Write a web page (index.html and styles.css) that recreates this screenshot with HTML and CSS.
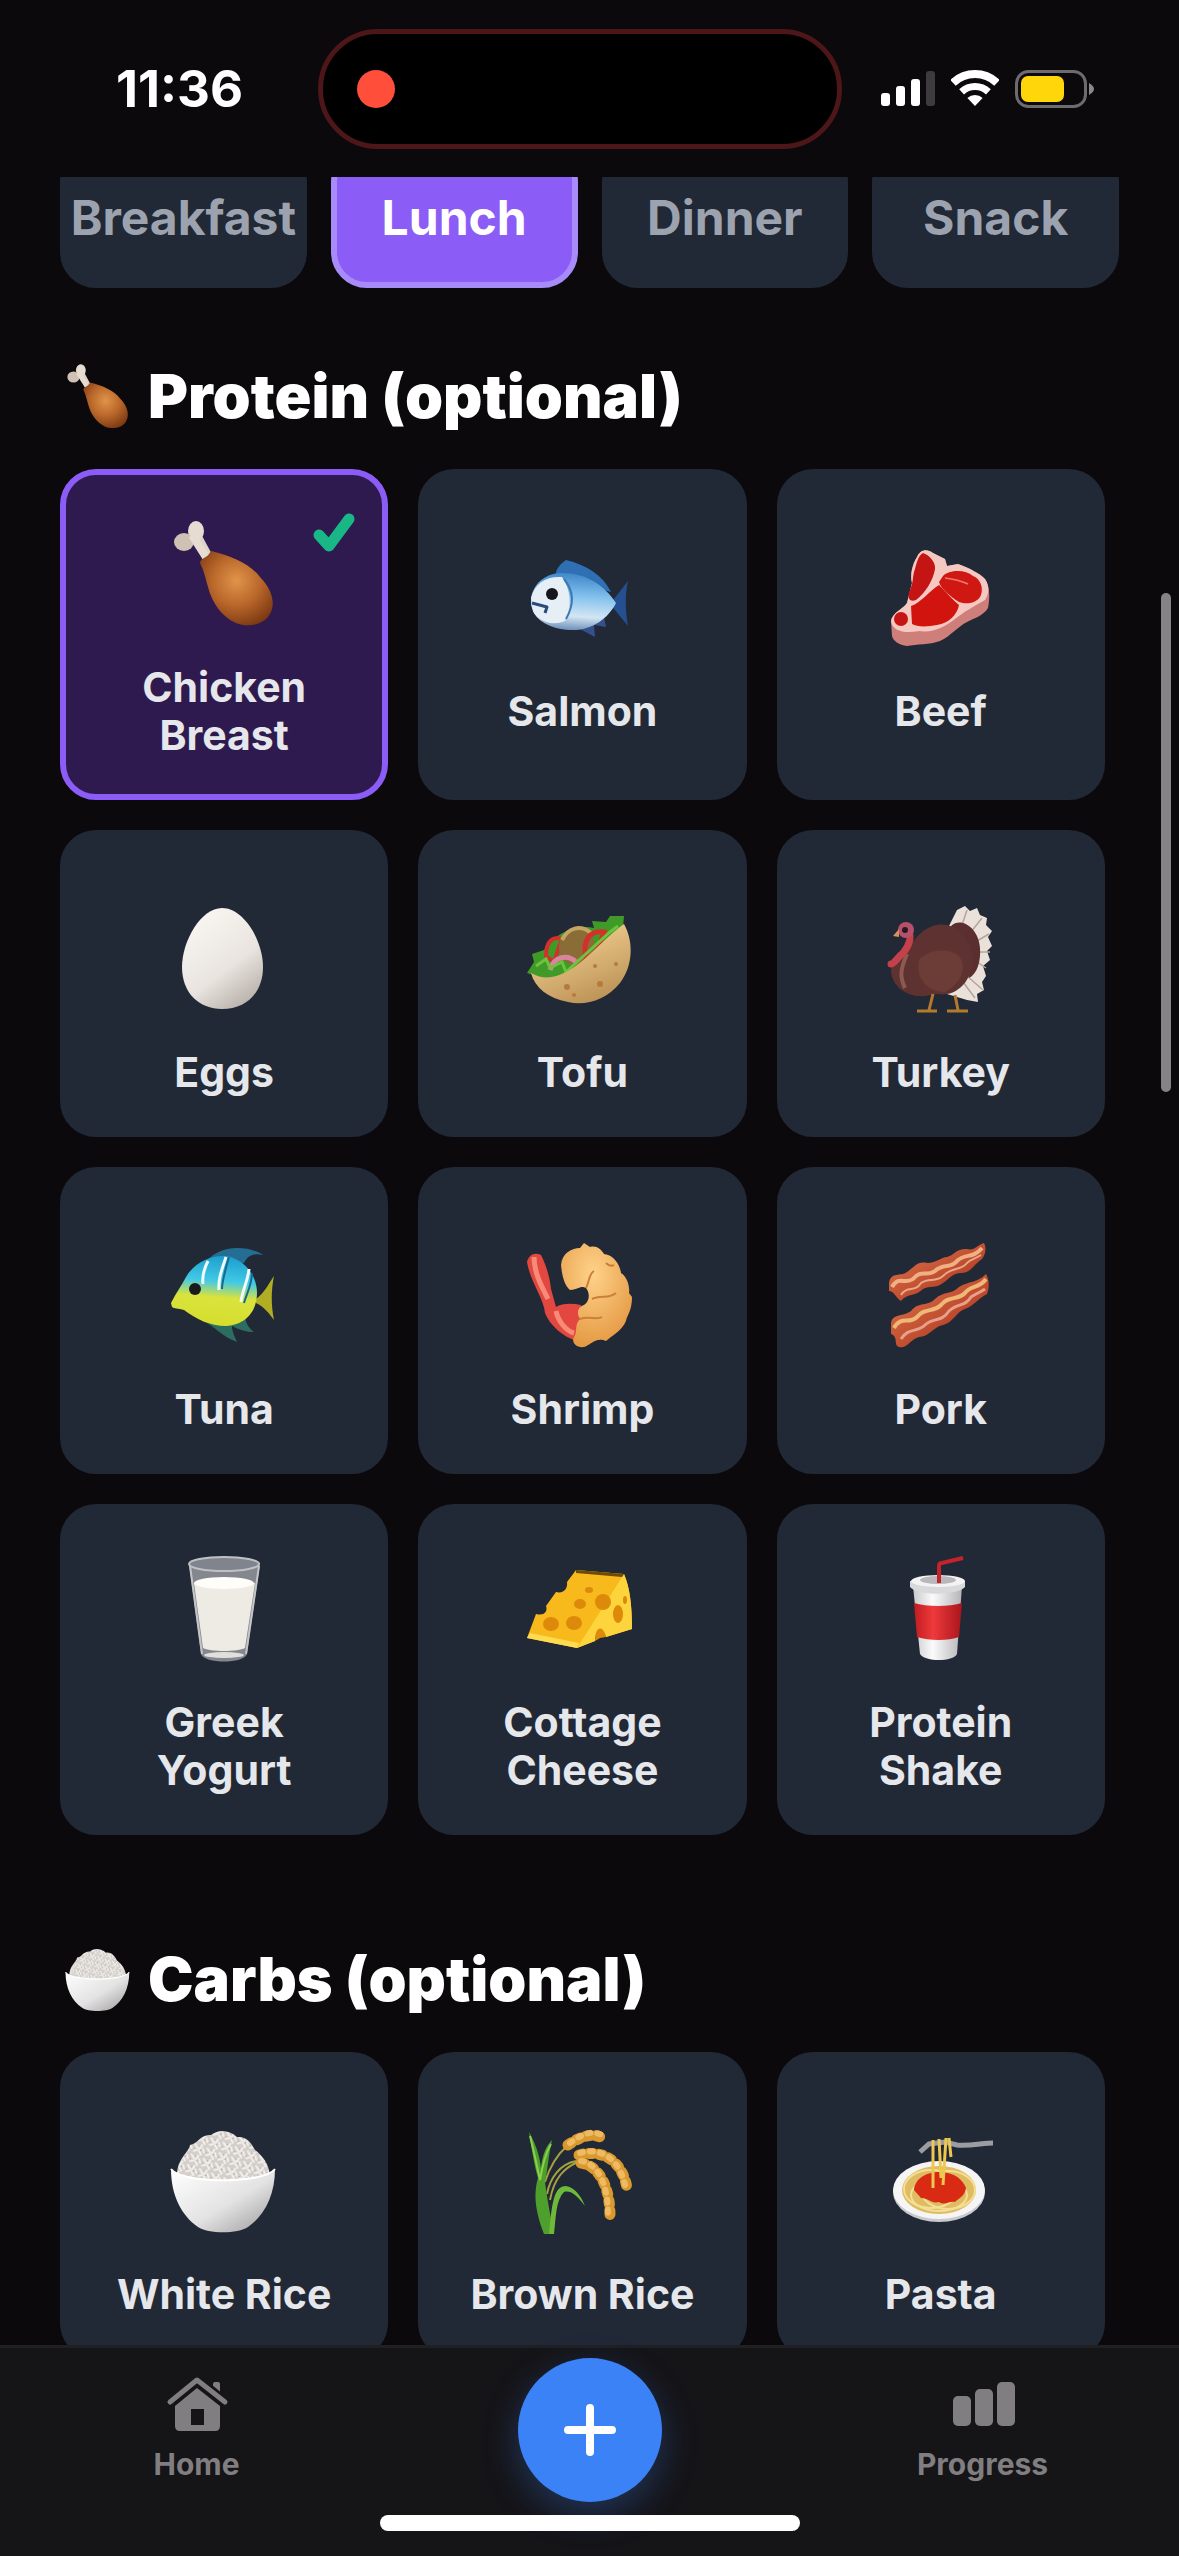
FILE: index.html
```
<!DOCTYPE html>
<html lang="en">
<head>
    <meta charset="UTF-8">
    <meta name="viewport" content="width=device-width, initial-scale=1.0">
    <title>Meal Builder</title>
    <link rel="stylesheet" href="styles.css">
</head>
<body>
    <!-- Shared icons and gradients -->
    <svg class="sprite" aria-hidden="true">
        <defs>
            <radialGradient id="meat" cx="0.5" cy="0.4" r="0.65">
                <stop offset="0" stop-color="#e0944a"/>
                <stop offset="0.5" stop-color="#bb682b"/>
                <stop offset="1" stop-color="#7a3812"/>
            </radialGradient>
            <linearGradient id="bowl" x1="0" y1="0" x2="1" y2="1">
                <stop offset="0" stop-color="#ffffff"/>
                <stop offset="0.55" stop-color="#e4e3e3"/>
                <stop offset="1" stop-color="#9a9898"/>
            </linearGradient>
            <pattern id="grains" width="13" height="11" patternUnits="userSpaceOnUse" patternTransform="rotate(20)">
                <rect width="13" height="11" fill="#d3cec9"/>
                <path d="M1 2l4 3M8 1l-1 4M10 4l2 3M2 9l3-2M7 7l3 3" stroke="#f4f1ee" stroke-width="2" stroke-linecap="round"/>
                <path d="M5 2l1 1M9 5l-1 2M1 6l1 1" stroke="#aaa49f" stroke-width="1"/>
            </pattern>
            <linearGradient id="egg" x1="0.2" y1="0" x2="0.8" y2="1">
                <stop offset="0" stop-color="#faf7f4"/>
                <stop offset="0.6" stop-color="#e9e4df"/>
                <stop offset="1" stop-color="#b5ada6"/>
            </linearGradient>
            <linearGradient id="tropical" x1="0.5" y1="0" x2="0.4" y2="1">
                <stop offset="0" stop-color="#1d9fce"/>
                <stop offset="0.35" stop-color="#42c9e6"/>
                <stop offset="0.58" stop-color="#d9e33c"/>
                <stop offset="1" stop-color="#d5de2c"/>
            </linearGradient>
            <linearGradient id="blueFish" x1="0.5" y1="0" x2="0.4" y2="1">
                <stop offset="0" stop-color="#3e86c9"/>
                <stop offset="0.4" stop-color="#84c2ee"/>
                <stop offset="0.75" stop-color="#d3e6f3"/>
                <stop offset="1" stop-color="#6c8db8"/>
            </linearGradient>
            <linearGradient id="pita" x1="0.3" y1="0.2" x2="0.7" y2="1">
                <stop offset="0" stop-color="#ecc98a"/>
                <stop offset="1" stop-color="#bb9155"/>
            </linearGradient>
            <radialGradient id="batter" cx="0.45" cy="0.3" r="0.75">
                <stop offset="0" stop-color="#ffd28a"/>
                <stop offset="1" stop-color="#e3963f"/>
            </radialGradient>
            <linearGradient id="cup" x1="0" y1="0" x2="1" y2="0">
                <stop offset="0" stop-color="#c9c9cc"/>
                <stop offset="0.4" stop-color="#fbfbfb"/>
                <stop offset="1" stop-color="#b4b3b8"/>
            </linearGradient>
            <linearGradient id="cupBand" x1="0" y1="0" x2="1" y2="0">
                <stop offset="0" stop-color="#c01c22"/>
                <stop offset="0.4" stop-color="#ee3a3b"/>
                <stop offset="1" stop-color="#a8151c"/>
            </linearGradient>
            <linearGradient id="bacon" x1="0" y1="0" x2="1" y2="1">
                <stop offset="0" stop-color="#e2784f"/>
                <stop offset="1" stop-color="#a52c17"/>
            </linearGradient>
        </defs>
        <symbol id="drumstick" viewBox="0 0 124 124">
            <path d="M34 24L48 50" stroke="#ded3c8" stroke-width="10" stroke-linecap="round"/>
            <ellipse cx="34" cy="20" rx="8" ry="10" fill="#e6dcd1"/>
            <ellipse cx="22" cy="31" rx="10" ry="9" fill="#cfc2b5"/>
            <path d="M30 24L44 46" stroke="#e6dcd1" stroke-width="8"/>
            <path d="M49 40C70 45 88 53 98 66C110 78 114 93 108 103C102 114 86 117 74 112C60 106 50 92 46 76C43 65 42 60 38 52C39 46 45 48 49 40Z" fill="url(#meat)"/>
        </symbol>
        <symbol id="rice-bowl" viewBox="0 0 124 124">
            <path d="M15 58C15 40 26 36 28 27C36 26 38 16 49 17C57 11 67 12 75 19C84 18 89 24 93 32C101 38 107 46 108 58L90 68H32Z" fill="url(#grains)"/>
            <path d="M9 51C20 66 102 66 113 51C113 78 102 98 86 109C76 116 46 116 36 109C20 98 9 78 9 51Z" fill="url(#bowl)"/>
            <path d="M9 51C20 66 102 66 113 51" fill="none" stroke="#ffffff" stroke-width="2"/>
        </symbol>
    </svg>

    <div class="screen">
        <header class="status-bar">
            <span class="time">11:36</span>
            <div class="island"><span class="record-dot"></span></div>
            <div class="status-icons">
                <svg width="54" height="38" viewBox="0 0 54 38" fill="#ffffff">
                    <rect x="0" y="23" width="9" height="13" rx="3"/>
                    <rect x="15" y="16" width="9" height="20" rx="3"/>
                    <rect x="30" y="9" width="9" height="27" rx="3"/>
                    <rect x="45" y="1" width="9" height="35" rx="3" fill="#3d3b3e"/>
                </svg>
                <svg width="48" height="38" viewBox="0 0 48 38" fill="none" stroke="#ffffff">
                    <path d="M2 12.8A32 32 0 0 1 46 12.8" stroke-width="8"/>
                    <path d="M10.6 21.9A19.5 19.5 0 0 1 37.4 21.9" stroke-width="7"/>
                    <path d="M24 36L16.4 28A11 11 0 0 1 31.6 28Z" fill="#ffffff" stroke="none"/>
                </svg>
                <svg width="80" height="38" viewBox="0 0 80 38">
                    <rect x="1.5" y="1.5" width="69" height="35" rx="12" fill="none" stroke="#6d6b6e" stroke-width="3"/>
                    <rect x="6" y="6" width="43" height="26" rx="7" fill="#ffd60a"/>
                    <path d="M74 13Q79 16 79 19Q79 22 74 25Z" fill="#8a888b"/>
                </svg>
            </div>
        </header>

        <main class="content">
            <div class="tabs">
                <button class="tab">Breakfast</button>
                <button class="tab active">Lunch</button>
                <button class="tab">Dinner</button>
                <button class="tab">Snack</button>
            </div>

            <h2 class="section-title"><svg class="title-icon"><use href="#drumstick"/></svg>Protein (optional)</h2>
            <div class="cards">
                <button class="card two-line selected">
                    <svg class="food"><use href="#drumstick"/></svg>
                    <span>Chicken<br>Breast</span>
                    <svg class="check" viewBox="0 0 42 40"><path d="M6 22L16 33L36 6" fill="none" stroke="#18b785" stroke-width="11" stroke-linecap="round" stroke-linejoin="round"/></svg>
                </button>
                <button class="card">
                    <svg class="food" viewBox="0 0 124 124">
                        <path d="M35 42C36 32 42 28 46 25C66 30 83 40 91 57Z" fill="#2f6fb3"/>
                        <path d="M90 69L108 46C105 60 105 74 108 91Z" fill="#24508f"/>
                        <path d="M56 92L75 102L74 90L86 92L84 82Z" fill="#35508a"/>
                        <path d="M11 63C14 46 28 38 42 38C66 38 84 50 96 68C88 84 72 94 56 95C36 96 18 88 13 76L11 70Z" fill="url(#blueFish)"/>
                        <path d="M11 63C15 48 26 41 42 42C51 55 52 70 45 86C28 93 15 82 13 76Z" fill="#e6eff5"/>
                        <path d="M44 44C54 56 54 70 46 84" fill="none" stroke="#3e78b0" stroke-width="2"/>
                        <path d="M12 68L27 72L25 78" fill="none" stroke="#2b4a80" stroke-width="3" stroke-linejoin="round"/>
                        <ellipse cx="32" cy="59" rx="6" ry="6" fill="#15171c"/>
                    </svg>
                    <span>Salmon</span>
                </button>
                <button class="card">
                    <svg class="food" viewBox="0 0 124 124">
                        <path d="M12 86C13 78 24 74 28 68L33 48C31 40 33 30 38 22C42 14 48 14 54 18L66 24L68 31L79 29C92 34 100 38 106 44C111 50 111 64 109 73C105 80 96 83 88 87C78 92 72 101 61 106C50 110 38 109 28 111C20 110 14 106 13 101Z" fill="#cf7f79"/>
                        <path d="M12 86C13 78 24 74 28 68L33 48C31 40 33 30 38 22C42 14 48 14 54 18L66 24L68 31L79 29C92 34 100 38 106 44C111 52 110 59 106 65C94 72 86 76 76 84C66 92 54 98 40 96C26 99 13 96 12 86Z" fill="#f5c9c2"/>
                        <path d="M44 18C50 20 57 27 56 34C54 46 46 58 37 65C31 68 27 62 31 55C35 46 33 42 36 34C38 26 40 20 44 18Z" fill="#c41414"/>
                        <path d="M64 41C70 35 86 34 94 41C100 43 105 51 102 60C99 68 88 70 80 67C72 62 62 54 60 47Z" fill="#d01812"/>
                        <path d="M32 71C42 68 50 56 60 50C68 58 74 65 80 70C78 80 70 88 58 90C48 92 38 92 33 89Z" fill="#d2140f"/>
                        <ellipse cx="22" cy="84" rx="7" ry="7" fill="#c41414"/>
                        <path d="M66 43C74 44 80 45 89 49" fill="none" stroke="#ee7a70" stroke-width="1.5"/>
                    </svg>
                    <span>Beef</span>
                </button>
                <button class="card">
                    <svg class="food" viewBox="0 0 124 124">
                        <path d="M60 12C82 12 101 45 101 71C101 97 84 113 60 113C37 113 20 97 20 71C20 45 39 12 60 12Z" fill="url(#egg)"/>
                    </svg>
                    <span>Eggs</span>
                </button>
                <button class="card">
                    <svg class="food" viewBox="0 0 124 124">
                        <path d="M7 77L14 66L12 58L24 54C34 38 56 28 74 32L72 25L86 26L90 20L104 20L103 32L96 50L50 82L22 82Z" fill="#3f9a27"/>
                        <path d="M26 60C26 44 34 40 42 43L34 66Z" fill="none" stroke="#d3302c" stroke-width="4"/>
                        <ellipse cx="57" cy="51" rx="18" ry="19" fill="#8a6c36"/>
                        <path d="M42 44C48 32 60 28 71 37" fill="none" stroke="#c3a661" stroke-width="4"/>
                        <path d="M66 62C62 44 70 34 84 36L76 58Z" fill="none" stroke="#d3302c" stroke-width="5"/>
                        <path d="M30 74C34 60 48 58 56 66" fill="none" stroke="#d985a0" stroke-width="5"/>
                        <path d="M16 70L26 63L30 72L42 66L46 76L90 36L98 30" fill="none" stroke="#6bc43b" stroke-width="3"/>
                        <path d="M11 77C24 84 34 82 46 76C66 66 84 42 104 28C114 46 113 70 100 87C86 104 66 110 48 106C28 102 15 92 11 77Z" fill="url(#pita)"/>
                        <g fill="#b67b3c"><circle cx="47" cy="91" r="3"/><circle cx="80" cy="88" r="3"/><circle cx="75" cy="70" r="2"/><circle cx="96" cy="68" r="2"/><circle cx="54" cy="99" r="2"/></g>
                    </svg>
                    <span>Tofu</span>
                </button>
                <button class="card">
                    <svg class="food" viewBox="0 0 124 124">
                        <path d="M70 30L78 14L86 10L91 15L98 12L101 19L108 22L107 29L113 35L109 41L113 50L108 55L111 64L104 70L107 80L103 86L105 94L98 98L99 106L88 104L68 98Z" fill="#ebe1db"/>
                        <path d="M82 32L88 14M92 36L103 22M96 46L110 38M98 56L111 56M98 66L107 72M84 86L96 102M88 80L104 94" stroke="#b5a49d" stroke-width="1.5"/>
                        <path d="M72 30C82 20 100 32 101 52C102 66 98 78 90 82Z" fill="#5b2f30"/>
                        <path d="M30 54C38 34 58 22 76 32C90 42 96 58 92 74C88 90 74 101 58 98L46 100C28 102 12 90 12 74C13 64 24 64 30 54Z" fill="#5e3230"/>
                        <path d="M40 64C50 52 72 52 80 60C88 70 84 86 66 96C50 96 36 84 40 64Z" fill="#6c3d37"/>
                        <path d="M28 58C22 72 20 80 26 92" fill="none" stroke="#8c5a4e" stroke-width="4"/>
                        <path d="M27 34C35 38 30 50 24 57C18 62 15 68 12 68" fill="none" stroke="#c4404b" stroke-width="7" stroke-linecap="round"/>
                        <circle cx="27" cy="34" r="8" fill="#b8506a"/>
                        <circle cx="26" cy="34" r="3" fill="#241a25"/>
                        <path d="M20 33L14 40L20 41Z" fill="#d8925c"/>
                        <path d="M54 98L50 114M76 99L79 114M38 115H58M68 115H89" stroke="#b37a2c" stroke-width="3"/>
                    </svg>
                    <span>Turkey</span>
                </button>
                <button class="card">
                    <svg class="food" viewBox="0 0 124 124">
                        <path d="M38 34C50 20 62 15 75 15C86 15 96 18 101 22C92 20 86 22 82 30Z" fill="#246e93"/>
                        <path d="M94 66C102 60 106 52 112 43C109 58 109 72 112 87C107 80 102 74 94 70Z" fill="#b1ae23"/>
                        <path d="M40 88C52 92 60 104 75 109C72 102 70 98 70 93C78 97 84 99 92 99C86 94 84 90 83 84Z" fill="#2d6c60"/>
                        <path d="M9 70C14 60 20 52 24 44C32 30 48 22 64 23C82 26 95 42 95 60C95 78 84 92 64 93C48 93 34 86 22 77C16 75 12 76 10 74Z" fill="url(#tropical)"/>
                        <path d="M46 28C42 36 40 44 41 51M64 24C60 36 56 46 57 57M87 36C86 48 80 58 79 69" fill="none" stroke="#f0fbff" stroke-width="3"/>
                        <path d="M67 24C63 38 60 48 60 56M90 40C90 52 84 62 82 70" fill="none" stroke="#17698f" stroke-width="2"/>
                        <circle cx="33" cy="56" r="6" fill="#191b1c"/>
                    </svg>
                    <span>Tuna</span>
                </button>
                <button class="card">
                    <svg class="food" viewBox="0 0 124 124">
                        <path d="M7 29C9 21 15 19 21 22C27 34 30 46 31 56L36 74C42 70 52 70 61 72L58 108C42 104 30 92 25 80C24 66 10 48 7 29Z" fill="#e2483f"/>
                        <path d="M14 24C14 40 22 54 28 66M36 78C38 88 46 98 54 100" fill="none" stroke="#f88b77" stroke-width="5"/>
                        <path d="M41 32C42 20 52 15 60 15L64 10L70 14C78 12 82 18 84 21C94 22 100 32 101 40C108 44 110 56 109 60L112 64C112 78 107 82 106 88C102 98 90 104 86 108C78 104 72 110 68 112C60 118 50 110 54 104C58 98 54 92 60 86C56 80 58 74 64 72C70 68 70 60 66 55C60 52 60 56 50 57C44 52 42 42 41 32Z" fill="url(#batter)"/>
                        <path d="M66 55C70 48 68 42 74 38M72 66C80 62 90 66 96 60M60 86C70 82 76 88 82 84M86 30q4 4 8 2" fill="none" stroke="#cb8037" stroke-width="2"/>
                    </svg>
                    <span>Shrimp</span>
                </button>
                <button class="card">
                    <svg class="food" viewBox="0 0 124 124">
                        <path d="M10 50C12 38 22 44 28 39C36 34 38 28 48 30C58 30 62 24 68 24C76 22 76 16 88 16C96 18 98 12 105 10C108 16 106 22 103 26C94 32 92 40 82 40C74 40 70 46 64 50C56 56 52 52 44 56C36 64 28 60 22 68C16 64 15 58 10 58Z" fill="url(#bacon)"/>
                        <path d="M13 54C20 42 26 52 34 46C42 36 48 44 56 38C64 30 72 36 78 28C86 20 94 26 103 15" fill="none" stroke="#f0b083" stroke-width="4"/>
                        <path d="M22 62C28 52 36 60 42 50C50 44 56 50 64 43C72 34 82 38 88 30C92 26 96 26 102 22" fill="none" stroke="#e9a88a" stroke-width="2"/>
                        <path d="M12 90C14 80 24 84 32 78C40 68 48 74 56 66C64 58 72 62 80 54C90 48 98 50 107 41C111 48 110 56 108 61C98 66 96 72 86 76C78 78 74 90 64 92C54 94 50 104 40 104C32 106 28 116 20 114C14 112 20 104 12 101Z" fill="url(#bacon)"/>
                        <path d="M15 95C22 82 30 92 38 84C46 74 54 80 62 72C70 62 78 68 86 60C92 52 100 56 107 46" fill="none" stroke="#f0b878" stroke-width="4"/>
                        <path d="M22 106C30 94 38 100 46 92C54 84 62 90 70 78C78 70 86 74 92 64C98 60 100 60 106 56" fill="none" stroke="#e9a08a" stroke-width="3"/>
                    </svg>
                    <span>Pork</span>
                </button>
                <button class="card two-line">
                    <svg class="food" viewBox="0 0 124 124">
                        <path d="M27 18L39 108C42 118 82 118 85 108L98 18Z" fill="#84878e"/>
                        <path d="M32 37L41 102C48 106 76 106 83 102L93 37Z" fill="#eeebe4"/>
                        <ellipse cx="62" cy="37" rx="30" ry="6" fill="#fffdf9"/>
                        <ellipse cx="62" cy="18" rx="35" ry="7" fill="#80848c" stroke="#bfc1c6" stroke-width="2"/>
                        <path d="M28 20L40 108M97 20L84 108" stroke="#c3c5c9" stroke-width="2"/>
                        <ellipse cx="62" cy="109" rx="20" ry="3" fill="#e1dfdc"/>
                    </svg>
                    <span>Greek<br>Yogurt</span>
                </button>
                <button class="card two-line">
                    <svg class="food" viewBox="0 0 124 124">
                        <path d="M56 24L104 28C110 42 112 60 112 83L86 91C84 82 75 82 75 95L57 102L7 92L16 68C24 70 28 66 26 60L36 46C44 48 48 42 47 36Z" fill="#f8b91d"/>
                        <path d="M104 28C110 42 112 60 112 83L86 91C84 82 75 82 75 95L57 102Z" fill="#fdd43b"/>
                        <path d="M56 24L104 28L102 31L56 27Z" fill="#6f4a05"/>
                        <path d="M7 92L57 102L59 97L10 87Z" fill="#ffdb50"/>
                        <g fill="#dd8a0b">
                            <ellipse cx="31" cy="78" rx="8" ry="7"/><ellipse cx="54" cy="77" rx="8" ry="7"/>
                            <ellipse cx="60" cy="58" rx="6" ry="5"/><ellipse cx="69" cy="44" rx="4" ry="3"/>
                            <ellipse cx="83" cy="56" rx="8" ry="8"/><ellipse cx="98" cy="68" rx="5" ry="9"/>
                            <ellipse cx="105" cy="54" rx="2" ry="4"/><path d="M75 95C75 78 84 80 86 91L80 92Z"/>
                        </g>
                    </svg>
                    <span>Cottage<br>Cheese</span>
                </button>
                <button class="card two-line">
                    <svg class="food" viewBox="0 0 124 124">
                        <path d="M34 40L41 108C46 116 74 116 78 108L83 40Z" fill="url(#cup)"/>
                        <path d="M35 57C48 61 70 61 83 57L80 91C70 95 50 95 38 91Z" fill="url(#cupBand)"/>
                        <path d="M31 35V41C38 50 78 50 86 41V35Z" fill="#d9d8da"/>
                        <ellipse cx="59" cy="35" rx="27" ry="6" fill="#f4f3f3"/>
                        <ellipse cx="59" cy="34" rx="18" ry="4" fill="#b9b7ba"/>
                        <path d="M60 37V20Q60 17 63 17L84 12" fill="none" stroke="#c5232b" stroke-width="4"/>
                    </svg>
                    <span>Protein<br>Shake</span>
                </button>
            </div>

            <h2 class="section-title carbs-title"><svg class="title-icon"><use href="#rice-bowl"/></svg>Carbs (optional)</h2>
            <div class="cards">
                <button class="card">
                    <svg class="food"><use href="#rice-bowl"/></svg>
                    <span>White Rice</span>
                </button>
                <button class="card">
                    <svg class="food" viewBox="0 0 124 124">
                        <path d="M25 64C30 48 38 36 47 28M27 76C30 60 40 46 56 43M30 82C34 60 44 50 58 44" fill="none" stroke="#a5a13f" stroke-width="2"/>
                        <path d="M24 116C14 90 14 74 18 60C14 46 12 32 9 14C18 30 20 42 21 50C22 38 26 28 32 22C28 40 28 50 25 64C27 80 30 96 34 116Z" fill="#4e9f2c"/>
                        <path d="M29 116C32 84 34 68 46 68C56 70 62 80 65 88C56 76 50 72 44 74C36 82 36 98 34 116Z" fill="#6fb93a"/>
                        <path d="M10 18C14 34 17 48 20 62C22 50 26 34 31 26" fill="none" stroke="#8bd04c" stroke-width="2"/>
                        <g fill="none" stroke="#d9992f" stroke-linecap="round" stroke-width="11" stroke-dasharray="4 6">
                            <path d="M48 27C58 20 70 14 83 20"/>
                            <path d="M59 37C82 31 102 42 107 70"/>
                            <path d="M61 45C80 48 90 70 90 98"/>
                        </g>
                        <g fill="none" stroke="#eebb62" stroke-linecap="round" stroke-width="6" stroke-dasharray="3 7">
                            <path d="M50 25C60 18 70 11 82 17"/>
                            <path d="M60 35C80 29 99 40 105 67"/>
                            <path d="M61 43C79 46 88 68 88 96"/>
                        </g>
                    </svg>
                    <span>Brown Rice</span>
                </button>
                <button class="card">
                    <svg class="food" viewBox="0 0 124 124">
                        <ellipse cx="60" cy="74" rx="46" ry="30" fill="#c9cace"/>
                        <ellipse cx="60" cy="72" rx="46" ry="29" fill="#f5f5f5"/>
                        <ellipse cx="60" cy="72" rx="37" ry="24" fill="#dfbb61"/>
                        <g fill="none" stroke="#f4df96" stroke-width="2">
                            <ellipse cx="52" cy="71" rx="27" ry="19"/><ellipse cx="69" cy="72" rx="27" ry="19"/>
                            <ellipse cx="60" cy="77" rx="28" ry="16"/>
                        </g>
                        <path d="M35 72C36 60 48 54 60 54C76 54 84 62 87 70C86 78 80 80 76 84C70 83 66 88 60 84C52 86 50 80 42 80Z" fill="#d92a13"/>
                        <path d="M41 34L50 26L66 24L78 27C92 28 104 25 114 25" fill="none" stroke="#9c9da2" stroke-width="5"/>
                        <path d="M54 22V70M60 21L62 60M67 20L64 67M70 20L72 39" fill="none" stroke="#edc850" stroke-width="3"/>
                    </svg>
                    <span>Pasta</span>
                </button>
            </div>
            <div class="scroll-thumb"></div>
        </main>

        <footer class="bottom-bar">
            <nav class="nav">
                <a class="nav-item" href="#">
                    <svg width="64" height="64" viewBox="0 0 64 64" fill="#807e81">
                        <path d="M48 24V13Q48 11 50 11H53Q55 11 55 13V30Z"/>
                        <path d="M5 31L32 8L60 31" fill="none" stroke="#151417" stroke-width="10"/>
                        <path d="M5 31L32 9L60 31" fill="none" stroke="#807e81" stroke-width="5" stroke-linecap="round" stroke-linejoin="round"/>
                        <path d="M10 35L32 17L55 35V55Q55 60 50 60H15Q10 60 10 55Z"/>
                        <rect x="26" y="38" width="13" height="16" fill="#151417"/>
                    </svg>
                    Home
                </a>
                <button class="add-button" aria-label="Add">
                    <svg width="56" height="56" viewBox="0 0 56 56" stroke="#ffffff" stroke-width="8" stroke-linecap="round"><path d="M28 6V50M6 28H50"/></svg>
                </button>
                <a class="nav-item" href="#">
                    <svg width="64" height="64" viewBox="0 0 64 64" fill="#807e81">
                        <rect x="2" y="25" width="18" height="30" rx="5"/>
                        <rect x="24" y="18" width="18" height="37" rx="5"/>
                        <rect x="46" y="11" width="18" height="44" rx="5"/>
                    </svg>
                    Progress
                </a>
            </nav>
            <div class="home-indicator"></div>
        </footer>
    </div>
</body>
</html>
```
FILE: styles.css
```
* {
    box-sizing: border-box;
}

body {
    margin: 0;
    background-color: #0b090c;
    color: white;
    font-family: Inter, 'Liberation Sans', sans-serif;
}

button {
    font-family: inherit;
    cursor: pointer;
}

.sprite {
    position: absolute;
    width: 0;
    height: 0;
}

.screen {
    display: flex;
    flex-direction: column;
    height: 100vh;
}

/* Status bar */
.status-bar {
    display: flex;
    align-items: center;
    gap: 39px;
    height: 177px;
    flex-shrink: 0;
    padding: 0 84px 0 116px;
}

.time {
    flex: 1;
    font-size: 51px;
    font-weight: 700;
}

.island {
    display: flex;
    align-items: center;
    width: 524px;
    height: 120px;
    padding-left: 34px;
    background-color: #000;
    border: 5px solid #4d1618;
    border-radius: 60px;
}

.record-dot {
    width: 38px;
    height: 38px;
    background-color: #ff4f3b;
    border-radius: 50%;
}

.status-icons {
    display: flex;
    gap: 16px;
}

/* Scrolling content */
.content {
    position: relative;
    flex: 1;
    min-height: 0;
    overflow: hidden;
    padding: 0 60px;
}

/* The tabs are scrolled partly under the status bar */
.tabs {
    display: grid;
    grid-template-columns: repeat(4, 1fr);
    gap: 24px;
    margin-top: -31px;
}

.tab {
    height: 142px;
    padding: 0;
    background-color: #212836;
    color: #9ca3af;
    border: 6px solid #212836;
    border-radius: 36px;
    font-size: 48px;
    font-weight: 700;
}

.tab.active {
    background-color: #8b5cf6;
    border-color: #a78bfa;
    color: white;
}

.section-title {
    display: flex;
    align-items: center;
    gap: 12px;
    height: 72px;
    margin: 72px 0 37px;
    font-size: 61px;
    font-weight: 900;
}

.carbs-title {
    margin-top: 108px;
}

.title-icon {
    width: 76px;
    height: 76px;
}

.cards {
    display: grid;
    grid-template-columns: repeat(3, 31%);
    gap: 30px;
}

.card {
    position: relative;
    display: flex;
    flex-direction: column;
    align-items: center;
    justify-content: flex-start;
    padding: 60px 20px 35px;
    background-color: #212836;
    color: #e5e7eb;
    border: 6px solid #212836;
    border-radius: 36px;
    font-size: 41px;
    font-weight: 700;
    line-height: 48px;
}

.card.two-line {
    padding-top: 36px;
}

.card.selected {
    background-color: #2e1a4f;
    border-color: #8b5cf6;
}

.food {
    width: 124px;
    height: 124px;
    margin-bottom: 28px;
}

.check {
    position: absolute;
    top: 38px;
    right: 27px;
    width: 42px;
    height: 40px;
}

.scroll-thumb {
    position: absolute;
    top: 416px;
    right: 8px;
    width: 10px;
    height: 499px;
    background-color: #858386;
    border-radius: 5px;
}

/* Bottom bar */
.bottom-bar {
    position: relative;
    flex-shrink: 0;
    padding: 10px 0 25px;
    background-color: #151417;
    border-top: 3px solid #201f22;
}

.nav {
    display: grid;
    grid-template-columns: repeat(3, 1fr);
    justify-items: center;
}

.nav-item {
    display: flex;
    flex-direction: column;
    align-items: center;
    gap: 11px;
    padding-top: 13px;
    color: #807e81;
    font-size: 30px;
    font-weight: 700;
    line-height: 36px;
    text-decoration: none;
}

.add-button {
    display: flex;
    align-items: center;
    justify-content: center;
    width: 144px;
    height: 144px;
    padding: 0;
    background-color: #3b82f6;
    border: none;
    border-radius: 50%;
    box-shadow: 0 12px 36px rgba(59, 130, 246, 0.3);
}

.home-indicator {
    position: relative;
    width: 420px;
    height: 16px;
    margin: 13px auto 0;
    background-color: white;
    border-radius: 8px;
}
```
